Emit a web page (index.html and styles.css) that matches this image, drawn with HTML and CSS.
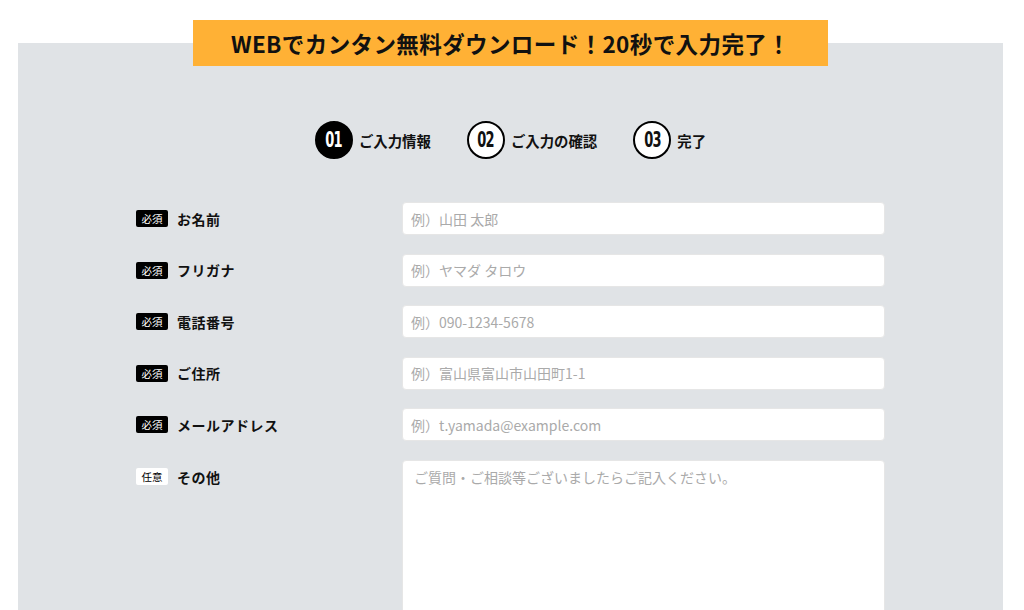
FILE: index.html
```html
<!DOCTYPE html>
<html lang="ja">
<head>
    <meta charset="UTF-8">
    <meta name="viewport" content="width=device-width, initial-scale=1.0">
    <title>無料ダウンロード</title>
    <link rel="stylesheet" href="styles.css">
</head>
<body>
    <div class="page">
        <h1 class="banner">WEBでカンタン無料ダウンロード！20秒で入力完了！</h1>

        <section class="panel">
            <ol class="steps">
                <li class="step active"><span class="num"><b>01</b></span>ご入力情報</li>
                <li class="step"><span class="num"><b>02</b></span>ご入力の確認</li>
                <li class="step"><span class="num"><b>03</b></span>完了</li>
            </ol>

            <form class="form">
                <div class="row">
                    <label for="name"><span class="tag">必須</span>お名前</label>
                    <input id="name" type="text" placeholder="例）山田 太郎">
                </div>
                <div class="row">
                    <label for="kana"><span class="tag">必須</span>フリガナ</label>
                    <input id="kana" type="text" placeholder="例）ヤマダ タロウ">
                </div>
                <div class="row">
                    <label for="tel"><span class="tag">必須</span>電話番号</label>
                    <input id="tel" type="tel" placeholder="例）090-1234-5678">
                </div>
                <div class="row">
                    <label for="address"><span class="tag">必須</span>ご住所</label>
                    <input id="address" type="text" placeholder="例）富山県富山市山田町1-1">
                </div>
                <div class="row">
                    <label for="email"><span class="tag">必須</span>メールアドレス</label>
                    <input id="email" type="email" placeholder="例）t.yamada@example.com">
                </div>
                <div class="row">
                    <label for="other"><span class="tag optional">任意</span>その他</label>
                    <textarea id="other" placeholder="ご質問・ご相談等ございましたらご記入ください。"></textarea>
                </div>
            </form>
        </section>
    </div>
</body>
</html>
```

FILE: styles.css
```css
:root {
    --panel-color: #e0e3e6;
    --banner-color: #ffb135;
    --text-color: #111;
    --placeholder-color: #aaa;
}

body {
    margin: 0;
    background-color: #fff;
    color: var(--text-color);
    font-family: "Noto Sans CJK JP", "Noto Sans", sans-serif;
}

.page {
    padding: 20px 21px 0 18px;
    display: flex;
    flex-direction: column;
    align-items: center;
}

.banner {
    position: relative;
    z-index: 1;
    width: 635px;
    height: 46px;
    margin: 0 0 -23px;
    background-color: var(--banner-color);
    font-size: 22.5px;
    font-weight: 700;
    line-height: 46px;
    letter-spacing: 0.4px;
    text-align: center;
}

.panel {
    align-self: stretch;
    background-color: var(--panel-color);
    padding: 78px 0 0;
    min-height: 600px;
    display: flex;
    flex-direction: column;
    align-items: center;
}

.steps {
    list-style: none;
    margin: 0 0 43px;
    padding: 0;
    display: flex;
    align-items: center;
    gap: 36px;
}

.step {
    display: flex;
    align-items: center;
    gap: 6px;
    font-size: 14.4px;
    font-weight: 700;
}

.num {
    box-sizing: border-box;
    width: 38px;
    height: 38px;
    border: 2px solid #000;
    border-radius: 50%;
    background-color: #fff;
    display: flex;
    align-items: center;
    justify-content: center;
    font-family: "DejaVu Sans", sans-serif;
    font-size: 21px;
    font-weight: 700;
}

.num b {
    display: inline-block;
    transform: scaleX(0.62);
    letter-spacing: -1px;
}

.step.active .num {
    background-color: #000;
    color: #fff;
}

.form {
    width: 749px;
    display: flex;
    flex-direction: column;
    gap: 18.5px;
}

.row {
    display: grid;
    grid-template-columns: 266px 1fr;
    align-items: center;
}

.row:last-child {
    align-items: start;
}

.row:last-child label {
    padding-top: 7px;
}

label {
    display: flex;
    align-items: center;
    gap: 9px;
    font-size: 14px;
    font-weight: 700;
    letter-spacing: 0.5px;
}

.tag {
    width: 32px;
    height: 17px;
    border-radius: 2px;
    background-color: #000;
    color: #fff;
    font-size: 10.5px;
    font-weight: 400;
    line-height: 17px;
    letter-spacing: 0;
    text-align: center;
}

.tag.optional {
    background-color: #fff;
    color: #000;
}

input, textarea {
    box-sizing: border-box;
    width: 100%;
    border: 1px solid #e6e6e6;
    border-radius: 4px;
    background-color: #fff;
    font-family: inherit;
    font-size: 14px;
    color: var(--text-color);
    outline: none;
}

input {
    height: 33px;
    padding: 0 8px;
}

textarea {
    height: 200px;
    padding: 6px 11px;
    resize: none;
}

input::placeholder, textarea::placeholder {
    color: var(--placeholder-color);
}
```
